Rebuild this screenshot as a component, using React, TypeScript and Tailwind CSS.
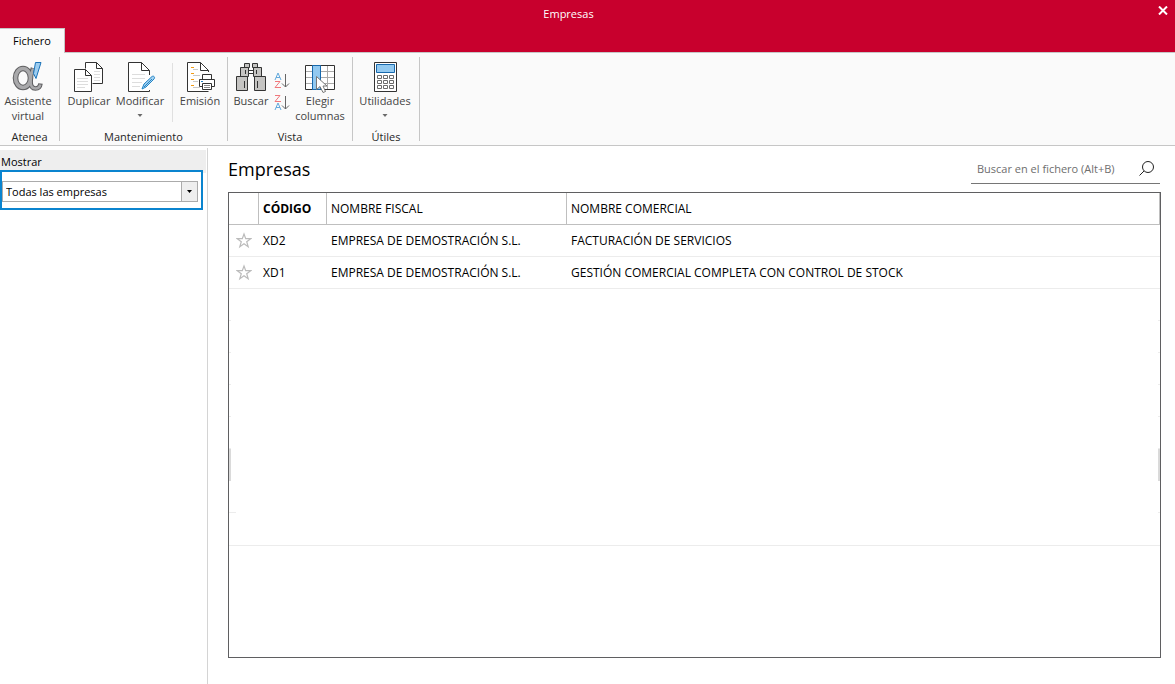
import React from 'react';

const companies = [
  { code: 'XD2', fiscalName: 'EMPRESA DE DEMOSTRACIÓN S.L.', tradeName: 'FACTURACIÓN DE SERVICIOS' },
  { code: 'XD1', fiscalName: 'EMPRESA DE DEMOSTRACIÓN S.L.', tradeName: 'GESTIÓN COMERCIAL COMPLETA CON CONTROL DE STOCK' },
];

interface RibbonGroupProps {
  title: string;
  className: string;
  children: React.ReactNode;
}

function RibbonGroup({ title, className, children }: RibbonGroupProps) {
  return (
    <section className="flex" aria-label={title}>
      <div className={`flex h-[88px] flex-col justify-between ${className}`}>
        <div className="flex items-start pt-1">{children}</div>
        <h2 className="pb-px text-center text-[11px] leading-[14px] text-[#262626]">{title}</h2>
      </div>
      <div className="h-[84px] w-px bg-[#c6c6c6]" />
    </section>
  );
}

interface RibbonButtonProps {
  label: string;
  icon: React.ReactNode;
  className: string;
  dropdown?: boolean;
}

function RibbonButton({ label, icon, className, dropdown }: RibbonButtonProps) {
  return (
    <button type="button" className={`flex flex-col items-center text-[11px] leading-[15px] text-[#444] ${className}`}>
      {icon}
      <span className="whitespace-pre-line">{label}</span>
      {dropdown && (
        <svg className="mt-1.5" width="6" height="3" viewBox="0 0 6 3" aria-hidden="true">
          <path d="M0.500 0h5L3 3z" fill="#6a6a6a" />
        </svg>
      )}
    </button>
  );
}

function AlphaIcon() {
  return (
    <svg width="32" height="32" viewBox="0 0 32 32" fill="none">
      <path d="M21 7c-1.500 5-2.500 9-2.500 13 0 5 2 7.500 5 7.500 2.500 0 4.500-1.500 5-5" stroke="#5f5f61" strokeWidth="4.600" />
      <ellipse cx="11" cy="17" rx="7.500" ry="9.500" stroke="#5f5f61" strokeWidth="5.600" />
      <path d="M21 7.500c-1.500 5-2.500 9-2.500 12.500 0 5 2 7.500 5 7.500 2.500 0 4.300-1.500 4.800-4" stroke="#a9a9ab" strokeWidth="2.600" />
      <ellipse cx="11" cy="17" rx="7.500" ry="9.500" stroke="#a9a9ab" strokeWidth="3.600" />
      <path d="M23.500 1.500h5.500l-5 16-2.500-5z" fill="#9ccdf0" stroke="#1b72b8" />
    </svg>
  );
}

function DuplicateIcon() {
  return (
    <svg width="32" height="32" viewBox="0 0 32 32" fill="none" stroke="#333">
      <path d="M12.500 7.500v-6h11l6 6v15h-10" fill="#fff" />
      <path d="M23.500 1.500v6h6" />
      <path d="M21 10.500h6M21 13.500h6M21 16.500h6M21 19.500h6" stroke="#ddd" />
      <path d="M1.500 8.500h11l6 6v16h-17z" fill="#fff" />
      <path d="M12.500 8.500v6h6" />
      <path d="M4 17.500h11M4 20.500h11M4 23.500h11M4 26.500h8" stroke="#ddd" />
    </svg>
  );
}

function EditIcon() {
  return (
    <svg width="32" height="32" viewBox="0 0 32 32" fill="none" stroke="#333">
      <path d="M25.500 14V9.500l-8-8h-13v29h21V29" fill="#fff" />
      <path d="M17.500 1.500v8h8" />
      <path d="M8 13.500h13M8 17.500h13M8 21.500h10M8 25.500h8" stroke="#ddd" />
      <path d="M18 28l2-5 8-7.500c1.500-1 3.500.5 2 2.500l-8 8z" fill="#a5d2f1" stroke="#2284c6" />
      <path d="M20 26l8-8" stroke="#2284c6" />
    </svg>
  );
}

function PrintIcon() {
  return (
    <svg width="32" height="32" viewBox="0 0 32 32" fill="none" stroke="#333">
      <path d="M24.500 11V9.500l-8-8h-13v29h21" fill="#fff" />
      <path d="M16.500 1.500v8h8" />
      <path d="M7 6.500h3M7 12.500h3M7 18.500h3M7 24.500h3" stroke="#f39b13" />
      <path d="M9 8.500h5M9 14.500h7M9 20.500h5M9 26.500h7" stroke="#c9c9c9" />
      <path d="M18.500 18.500v-5h9v5" fill="#fff" />
      <path d="M15.500 18.500h15v7h-15z" fill="#fff" />
      <path d="M18.500 22.500h9v6h-9z" fill="#fff" />
      <path d="M20 24.500h6M20 26.500h6" stroke="#888" />
      <path d="M17 20.500h2" stroke="#2284c6" />
    </svg>
  );
}

function BinocularsIcon() {
  return (
    <svg width="32" height="32" viewBox="0 0 32 32" fill="#c5c4c2" stroke="#333">
      <path d="M9.500 2.500h5v4h-5zM17.500 2.500h5v4h-5z" />
      <path d="M13.500 9.500h5v3h-5z" fill="#fff" />
      <path d="M5.500 6.500h8v9h-8zM18.500 6.500h8v9h-8z" />
      <path d="M1.500 15.500h11v14h-11zM19.500 15.500h11v14h-11z" />
      <path d="M9.500 20v7M22.500 20v7M10.500 9v4M21.500 9v4" fill="none" />
    </svg>
  );
}

function ColumnsIcon() {
  return (
    <svg width="32" height="32" viewBox="0 0 32 32" fill="none">
      <path d="M1.500 4.500h29v24h-29z" fill="#fff" />
      <path d="M1.500 10.500h29M1.500 16.500h29M1.500 22.500h29M23.500 5v23" stroke="#aaa" />
      <path d="M1.500 4.500h29v24h-29z" stroke="#333" />
      <path d="M8.500 4.500h8v24h-8z" fill="#92c9f0" stroke="#1769ad" />
      <path d="M12.500 15.500v13l3.500-3 3 6 2.500-1-2.500-5.500h4z" fill="#fff" stroke="#777" />
    </svg>
  );
}

function CalculatorIcon() {
  return (
    <svg width="32" height="32" viewBox="0 0 32 32" fill="none">
      <path d="M5.500 1.500h22v29h-22z" fill="#fff" stroke="#333" />
      <path d="M7.500 3.500h18v8h-18z" fill="#92c9f0" stroke="#1769ad" />
      <path
        d="M8.500 14.500h4v3h-4zM14.500 14.500h4v3h-4zM20.500 14.500h4v3h-4zM8.500 19.500h4v3h-4zM14.500 19.500h4v3h-4zM20.500 19.500h4v3h-4zM8.500 24.500h4v3h-4zM14.500 24.500h4v3h-4zM20.500 24.500h4v3h-4z"
        stroke="#6b6b6b"
      />
    </svg>
  );
}

function SortIcon({ descending }: { descending?: boolean }) {
  return (
    <svg width="16" height="17" viewBox="0 0 16 17" fill="none">
      <path d={descending ? 'M1 16l3-7 3 7M2 13.500h4' : 'M1 8l3-7 3 7M2 5.500h4'} stroke="#63a9dc" />
      <path d={descending ? 'M1 1.500h5L1 7.500h6' : 'M1 9.500h5L1 15.500h6'} stroke="#f0787c" />
      <path d="M11.500 2v13M8 11.500l3.500 3.500 3.500-3.500" stroke="#666" />
    </svg>
  );
}

function StarIcon() {
  return (
    <svg className="mx-auto" width="16" height="18" viewBox="0 0 16 18" fill="none">
      <path d="M8 2l1.700 4.700h5l-4 3 1.500 5L8 11.800l-4.200 2.900 1.500-5-4-3h5z" stroke="#bbb" strokeWidth="1.200" />
    </svg>
  );
}

export default function App() {
  return (
    <div className="flex min-h-screen flex-col bg-white font-['Open_Sans',sans-serif] text-black">
      {/* Title bar */}
      <header className="bg-[#c8002d]">
        <div className="flex h-7 items-start">
          <h1 className="flex-1 text-center text-[11px] leading-7 text-white">Empresas</h1>
          <button type="button" aria-label="Cerrar" className="mt-1.5 flex w-[38px] justify-end pr-[7px]">
            <svg width="10" height="9" viewBox="0 0 10 9">
              <path d="M1 0.500l8 8M9 0.500l-8 8" stroke="#fff" strokeWidth="2" />
            </svg>
          </button>
        </div>
        <nav className="flex h-6">
          <button
            type="button"
            className="relative -mb-px w-[65px] border-t border-r border-[#c6c6c6] bg-[#fafafa] text-[11px]"
          >
            Fichero
          </button>
        </nav>
      </header>

      {/* Ribbon */}
      <div className="flex border-y border-[#c6c6c6] bg-[#fafafa] pt-1">
        <RibbonGroup title="Atenea" className="w-[59px]">
          <RibbonButton className="w-14" label={'Asistente\nvirtual'} icon={<AlphaIcon />} />
        </RibbonGroup>
        <RibbonGroup title="Mantenimiento" className="w-[167px]">
          <RibbonButton className="ml-[3px] w-[52px]" label="Duplicar" icon={<DuplicateIcon />} />
          <RibbonButton className="w-[50px]" label="Modificar" icon={<EditIcon />} dropdown />
          <div className="mt-0.5 ml-[7px] h-[59px] w-px bg-[#e0e0e0]" />
          <RibbonButton className="w-[54px]" label="Emisión" icon={<PrintIcon />} />
        </RibbonGroup>
        <RibbonGroup title="Vista" className="w-[124px]">
          <RibbonButton className="w-[46px]" label="Buscar" icon={<BinocularsIcon />} />
          <div className="flex flex-col gap-[5px] pt-[11px]">
            <button type="button" aria-label="Orden ascendente">
              <SortIcon />
            </button>
            <button type="button" aria-label="Orden descendente">
              <SortIcon descending />
            </button>
          </div>
          <RibbonButton className="w-[60px]" label={'Elegir\ncolumnas'} icon={<ColumnsIcon />} />
        </RibbonGroup>
        <RibbonGroup title="Útiles" className="w-[66px]">
          <RibbonButton className="w-16" label="Utilidades" icon={<CalculatorIcon />} dropdown />
        </RibbonGroup>
      </div>

      <div className="flex flex-1">
        {/* Filter panel */}
        <aside className="mt-0.5 w-[208px] shrink-0 border-r border-[#d4d4d4] pt-0.5">
          <label htmlFor="show" className="mr-px block h-[23px] bg-[#eee] pl-px text-[11px] leading-6">
            Mostrar
          </label>
          <div className="relative -mt-[3px] w-[203px] border-2 border-[#0a84cf] bg-white pt-[9px] pr-[3px] pb-1.5">
            <select
              id="show"
              className="block h-[21px] w-full appearance-none border border-[#ababab] bg-white pl-[3px] text-[11px] leading-[19px]"
            >
              <option>Todas las empresas</option>
            </select>
            <div className="pointer-events-none absolute top-[10px] right-1 flex h-[19px] w-4 items-center justify-center border-l border-[#ababab] bg-[#eee]">
              <svg width="5" height="3" viewBox="0 0 5 3">
                <path d="M0 0h5L2.500 3z" fill="#000" />
              </svg>
            </div>
          </div>
        </aside>

        {/* Company list */}
        <main className="flex flex-1 flex-col pt-2 pr-[14px] pb-[26px] pl-5">
          <div className="mb-2 flex items-start justify-between">
            <h2 className="text-[18px] leading-[30px]">Empresas</h2>
            <div className="mr-px flex h-[30px] w-[189px] items-center border-b border-[#767676] pl-1.5">
              <input
                type="text"
                aria-label="Buscar en el fichero"
                placeholder="Buscar en el fichero (Alt+B)"
                className="min-w-0 flex-1 pt-0.5 text-[11px] outline-none placeholder:text-[#6e6e6e]"
              />
              <button type="button" aria-label="Buscar" className="mr-1.5">
                <svg width="15" height="15" viewBox="0 0 15 15" fill="none" stroke="#222">
                  <circle cx="9" cy="6" r="5.500" />
                  <path d="M5 10L0.500 14.500" />
                </svg>
              </button>
            </div>
          </div>

          <div className="flex flex-1 flex-col border border-[#5f5f61]">
            <table className="w-full table-fixed border-separate border-spacing-0 text-left text-[12px]">
              <colgroup>
                <col className="w-[30px]" />
                <col className="w-[68px]" />
                <col className="w-[240px]" />
                <col />
              </colgroup>
              <thead>
                <tr className="h-8 *:border-r *:border-b *:border-[#bfbfbf] *:pl-1">
                  <th aria-label="Favorita" />
                  <th className="font-bold">CÓDIGO</th>
                  <th className="font-normal">NOMBRE FISCAL</th>
                  <th className="font-normal">NOMBRE COMERCIAL</th>
                </tr>
              </thead>
              <tbody>
                {companies.map((company) => (
                  <tr key={company.code} className="h-8 *:border-b *:border-[#ececec]">
                    <td>
                      <StarIcon />
                    </td>
                    <td className="pl-1">{company.code}</td>
                    <td className="pl-1">{company.fiscalName}</td>
                    <td className="pl-1">{company.tradeName}</td>
                  </tr>
                ))}
              </tbody>
            </table>

            {/* Empty rows: only their edges show */}
            {[0, 1, 2, 3, 4].map((row) => (
              <div key={row} className="flex h-8 justify-between">
                <span className="w-0.5 border-b border-[#ececec]" />
                <span className="w-0.5 border-b border-[#ececec]" />
              </div>
            ))}
            <div className="flex h-8 justify-between">
              <span className="w-0.5 bg-[#dadada]" />
              <span className="w-0.5 bg-[#dadada]" />
            </div>
            <div className="flex h-8 justify-between">
              <span className="w-[7px] border-b border-[#ececec]" />
              <span className="w-0.5 border-b border-[#ececec]" />
            </div>
            <div className="h-[33px] border-b border-[#ececec]" />
          </div>
        </main>
      </div>
    </div>
  );
}
